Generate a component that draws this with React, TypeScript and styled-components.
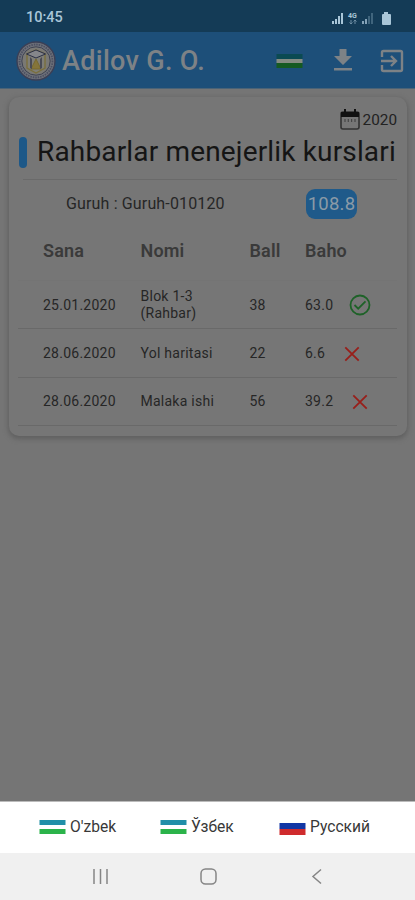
import React from 'react';
import styled, { createGlobalStyle } from 'styled-components';

const Global = createGlobalStyle`
  * { box-sizing: border-box; }
  body { margin: 0; background: #757575; font-family: Roboto, sans-serif; }
`;
const Screen = styled.div`
  width: 415px; height: 900px; display: flex; flex-direction: column;
  background: #757575; overflow: hidden; white-space: nowrap;
`;
const StatusBar = styled.div`
  height: 32px; flex: none; display: flex; align-items: center; justify-content: space-between;
  padding: 3px 22px 0 26px; background: #143b56; color: #a9c6d8;
`;
const Clock = styled.span`font-size: 14.5px; font-weight: 500; letter-spacing: 0;`;
const Header = styled.header`
  height: 57px; flex: none; display: flex; align-items: center; padding: 1px 11px 0 16px;
  background: #1d4f79; border-bottom: 1px solid #4a6377;
`;
const UserName = styled.h1`
  margin: 1px 0 0 6px; flex: 1; font-size: 27px; line-height: 32px; font-weight: 500; color: #7d8286; letter-spacing: 0.3px;
`;
const Actions = styled.div`display: flex; align-items: center;`;
const Action = styled.span<{ $gap: number }>`display: flex; margin-left: ${p => p.$gap}px;`;
const Card = styled.main`
  margin: 8px 8px 0 9px; height: 339px; flex: none; padding: 9px 10px 0 9px;
  background: #767676; border-radius: 10px;
  box-shadow: 0 2px 5px 1px #606060;
`;
const Year = styled.div`
  height: 27px; display: flex; justify-content: flex-end; align-items: center;
  font-size: 15.3px; color: #222; gap: 3px;
`;
const TitleRow = styled.div`
  height: 46px; display: flex; align-items: center; padding-bottom: 9px;
`;
const Marker = styled.i`
  flex: none; width: 8px; height: 31px; border-radius: 4px; background: #1d5888; margin: 2px 10px 0 1px;
`;
const Title = styled.h2`margin: 0; font-size: 28px; font-weight: 400; color: #151515; letter-spacing: 0.16px;`;
const Group = styled.div`
  height: 48px; border-top: 1px solid #6a6a6a; margin-left: 5px; padding-left: 43px;
  display: flex; align-items: center; font-size: 16px; color: #262626;
`;
const GroupName = styled.span`width: 240px; letter-spacing: 0.15px;`;
const Score = styled.b`
  width: 51px; height: 30px; border-radius: 9px; background: #1f5a8a; color: #8b9aa7;
  display: flex; align-items: center; justify-content: center; font-size: 18.5px; font-weight: 400; letter-spacing: 0.2px;
`;
const Row = styled.div<{ $head?: boolean }>`
  display: grid; grid-template-columns: 97.5px 109px 55.5px 1fr; align-items: center;
  padding: ${p => (p.$head ? '0 0 6px 25px' : '1px 0 0 25px')};
  height: ${p => (p.$head ? '54px' : '48.4px')};
  font-size: ${p => (p.$head ? '18px' : '14px')};
  font-weight: ${p => (p.$head ? 600 : 400)};
  color: ${p => (p.$head ? '#3a3a3a' : '#262626')};
  letter-spacing: ${p => (p.$head ? '0.15px' : '0.25px')};
  line-height: 17px;
  border-bottom: 1px solid ${p => (p.$head ? '#747474' : '#696969')};
`;
const Cell = styled.span`white-space: pre-line;`;
const Grade = styled.span`display: flex; align-items: center; gap: 16px;`;
const Filler = styled.div`flex: 1;`;
const LanguageSheet = styled.div`
  height: 52px; flex: none; display: flex; background: #fff; border-top: 1px solid #bbb;
  align-items: center; color: #383838; font-size: 15.6px; padding: 0 0 2px 39px;
`;
const Language = styled.div<{ $width?: number }>`
  display: flex; align-items: center; gap: 4px; width: ${p => (p.$width ? `${p.$width}px` : 'auto')};
`;
const FlagShape = styled.svg`display: block; flex: none;`;
const NavBar = styled.nav`
  height: 47px; flex: none; background: #f0f0f0; display: flex; align-items: center; padding-left: 92px;
`;

const UzFlag = ({ dim = false }: { dim?: boolean }) => (
  <FlagShape width="27" height="14" viewBox="0 0 27 14">
    <rect x=".5" width="26" height="5" fill={dim ? '#0b4a52' : '#218fa8'} />
    <rect x=".5" y="5" width="26" height="4" fill={dim ? '#858c82' : '#fff'} />
    <rect x=".5" y="9" width="26" height="5" fill={dim ? '#155a22' : '#2bb34a'} />
  </FlagShape>
);
const RuFlag = () => (
  <FlagShape width="27" height="17" viewBox="0 0 27 17">
    <rect x=".5" width="26" height="5" fill="#fff" />
    <rect x=".5" y="5" width="26" height="6" fill="#1237a5" />
    <rect x=".5" y="11" width="26" height="6" fill="#cf2b2d" />
  </FlagShape>
);
const Emblem = () => (
  <svg width="40" height="40" viewBox="0 0 40 40">
    <circle cx="20" cy="20" r="19" fill="#6d7078" stroke="#3b3f55" strokeWidth="1.4" />
    <circle cx="20" cy="20" r="16.500" fill="none" stroke="#4b4f62" strokeWidth="1.800" strokeDasharray="1.500 1" />
    <circle cx="20" cy="20" r="14.200" fill="#7a7974" stroke="#3f4354" strokeWidth="1" />
    <path d="M11 13 20 9l9 4v14l-9 5-9-5Z" fill="#7f7e76" stroke="#7a6f3d" strokeWidth="1.4" />
    <path d="m10.500 13 9.500-4 9.500 4-9.500 4Z" fill="#85868a" stroke="#2b3045" />
    <path d="m20 18-5 10h10Z" fill="#85753a" stroke="#736526" strokeWidth=".8" />
    <path d="m14 16 2 2v10l-2-1zM26 16l-2 2v10l2-1z" fill="#4a4b54" />
  </svg>
);
const StatusIcons = () => (
  <svg width="62" height="16" viewBox="0 0 62 16">
    <g fill="#a9c6d8">
      <path d="M1 11h2v3H1zM4 9h2v5H4zM7 6h2v8H7zM10 3h2v11h-2z" />
      <path d="M31 11h2v3h-2zM34 9h2v5h-2z" opacity=".75" />
      <path d="M37 6h2v8h-2zM40 3h2v11h-2z" opacity=".3" />
      <path d="M53 2h4v2h2q1 0 1 1v9q0 1-1 1h-7q-1 0-1-1V5q0-1 1-1h1z" />
    </g>
    <text x="17" y="8" fontSize="7" fontWeight="700" fill="#a9c6d8">4G</text>
    <path d="M20 10v4M18.500 12.500 20 14l1.500-1.500M24 14v-4m-1.500 1.500L24 10l1.500 1.500" stroke="#6e8ea3" fill="none" />
  </svg>
);
const Download = () => (
  <svg width="20" height="23" viewBox="0 0 20 23" fill="#7d8286">
    <path d="M6.500 0h7v7H19l-9 9L1 7h5.500zM1 19h18v2.600H1z" />
  </svg>
);
const Exit = () => (
  <svg width="24" height="24" viewBox="0 0 24 24" fill="none" stroke="#7d8286" strokeWidth="2.400">
    <path d="M2 8V3.500Q2 2 3.500 2h17Q22 2 22 3.500v17q0 1.500-1.500 1.500h-17Q2 22 2 20.500V16M1 12h14M11 7l5 5-5 5" />
  </svg>
);
const Calendar = () => (
  <svg width="20" height="21" viewBox="0 0 20 21">
    <rect x="1" y="3" width="18" height="17" rx="2" fill="none" stroke="#333" strokeWidth="1.600" />
    <path d="M1 3h3V0h2v3h8V0h2v3h3v5H1z" fill="#111" />
    <path d="M5 10v3M8.300 10v3M11.600 10v3M15 10v3" stroke="#464646" strokeWidth="1.200" />
  </svg>
);
const Passed = () => (
  <svg width="22" height="22" viewBox="0 0 22 22" fill="none" stroke="#1e6228" strokeWidth="1.800">
    <circle cx="11" cy="11" r="9.500" /><path d="m5.500 11 3.700 3.700 7.300-7.300" />
  </svg>
);
const Failed = () => (
  <svg width="22" height="22" viewBox="0 0 22 22" fill="none" stroke="#981f1a" strokeWidth="1.800">
    <path d="m4.300 4.300 13.400 13.400m0-13.400L4.300 17.700" />
  </svg>
);
const NavIcons = () => (
  <svg width="234" height="24" viewBox="0 0 234 24" fill="none" stroke="#858585" strokeWidth="1.500">
    <path d="M2 4v15M8.500 4v15M15 4v15" />
    <rect x="109" y="4" width="15" height="15" rx="4.500" />
    <path d="m229 4.500-8 7 8 7" />
  </svg>
);

const results = [
  { date: '25.01.2020', name: 'Blok 1-3\n(Rahbar)', points: 38, grade: '63.0', passed: true },
  { date: '28.06.2020', name: 'Yol haritasi', points: 22, grade: '6.6', passed: false },
  { date: '28.06.2020', name: 'Malaka ishi', points: 56, grade: '39.2', passed: false },
];

export default function App() {
  return (
    <Screen>
      <Global />
      <StatusBar><Clock>10:45</Clock><StatusIcons /></StatusBar>
      <Header>
        <Emblem />
        <UserName>Adilov G. O.</UserName>
        <Actions>
          <UzFlag dim />
          <Action $gap={30}><Download /></Action>
          <Action $gap={27}><Exit /></Action>
        </Actions>
      </Header>
      <Card>
        <Year><Calendar />2020</Year>
        <TitleRow><Marker /><Title>Rahbarlar menejerlik kurslari</Title></TitleRow>
        <Group><GroupName>Guruh : Guruh-010120</GroupName><Score>108.8</Score></Group>
        <Row $head><Cell>Sana</Cell><Cell>Nomi</Cell><Cell>Ball</Cell><Cell>Baho</Cell></Row>
        {results.map(r => (
          <Row key={r.name}>
            <Cell>{r.date}</Cell><Cell>{r.name}</Cell><Cell>{r.points}</Cell>
            <Grade>{r.grade}{r.passed ? <Passed /> : <Failed />}</Grade>
          </Row>
        ))}
      </Card>
      <Filler />
      <LanguageSheet>
        <Language $width={121}><UzFlag />O'zbek</Language>
        <Language $width={119}><UzFlag />Ўзбек</Language>
        <Language><RuFlag />Русский</Language>
      </LanguageSheet>
      <NavBar><NavIcons /></NavBar>
    </Screen>
  );
}
